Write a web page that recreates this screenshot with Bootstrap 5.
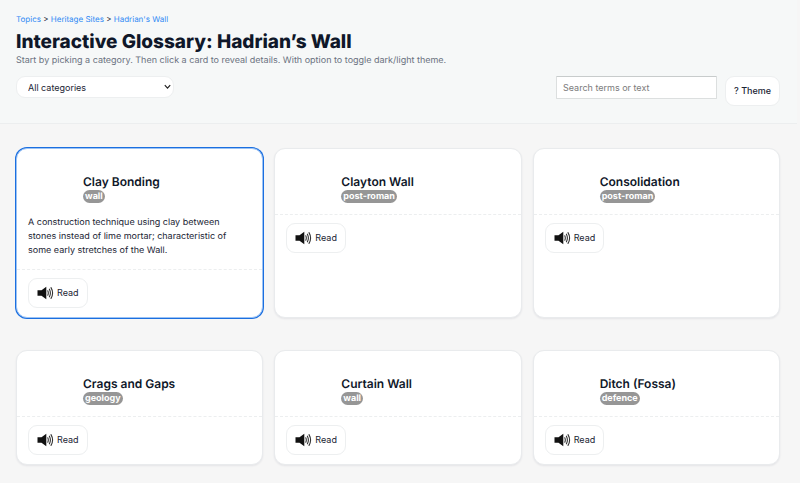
<!DOCTYPE html>
<html lang="en">
<head>
<meta charset="utf-8">
<meta name="viewport" content="width=device-width, initial-scale=1">
<title>Interactive Glossary: Hadrian’s Wall</title>
<link href="https://cdn.jsdelivr.net/npm/bootstrap@5.3.0/dist/css/bootstrap.min.css" rel="stylesheet">
<style>
body { font-family: Inter, "Liberation Sans", sans-serif; font-size: 9px; line-height: 14px; color: #1a2433; background: #f6f6f6; padding-right: 3px; text-rendering: geometricPrecision; }
.page-head { background: #f6f8f8; border-bottom: 1px solid #eceeef; padding: 12px 17px 17px 16px; }
.crumbs { font-size: 8px; color: #1a2433; }
.crumbs a { color: #2f8af5; text-decoration: none; }
.page-title { font-size: 19px; line-height: 25px; font-weight: 800; color: #0f1729; margin: 3px 0 0; }
.intro { color: #6b7280; margin: 0 0 8px; }
.pill { font-size: 9px; line-height: 14px; color: #1a2433; background: #fff; border: 1px solid #edeff0; border-radius: 9px; }
.pick { width: 158px; height: 22px; padding: 1px 24px 0 11px; appearance: none; }
.pick-wrap svg { right: 3px; top: 8px; pointer-events: none; }
.find { width: 161px; height: 23px; padding: 0 6px; font-size: 9px; line-height: 14px; color: #1a2433; border: 1px solid #dcdfdf; border-top-color: #c8cccc; border-radius: 1px; background: #fff; }
.find::placeholder { color: #7b7b7b; opacity: 1; }
.theme-btn { padding: 7px 8px; font-weight: 500; }
.terms { padding: 24px 17px 19px 16px; display: grid; grid-template-columns: repeat(3, minmax(0, 1fr)); gap: 32px 11px; }
.term { background: #fff; border: 1px solid #e9ebed; border-radius: 11px; box-shadow: 0 1px 2px rgba(20, 30, 60, .08); }
.term.active { border-color: #9cc3f4; box-shadow: 0 0 0 1px #1b6fe0; }
.term-head { padding: 25px 11px 11px 66px; }
.term-name { font-size: 12px; line-height: 16px; font-weight: 600; color: #0f1729; margin: 0; }
.tag { font-size: 9px; line-height: 13px; font-weight: 700; color: #fff; background: #969696; border-radius: 7px; padding: 0 2px; }
.term-text { padding: 2px 24px 11px 11px; margin: 0; }
.term-foot { border-top: 1px dashed #eceeef; padding: 8px 12px 9px 11px; }
.read { padding: 7px 8px; gap: 3px; }
</style>
<script src="https://cdn.jsdelivr.net/npm/bootstrap@5.3.0/dist/js/bootstrap.bundle.min.js" defer></script>
</head>
<body>
<svg class="d-none" aria-hidden="true">
  <symbol id="speaker" viewBox="0 0 17 14">
    <path d="M0.5 4.3h4L9.3.7v12.6L4.5 9.8h-4z" fill="#111"/>
    <path d="M10.8 4.8q1 2.2 0 4.4M12.4 3.2q2 3.8 0 7.6M14 1.6q3.2 5.4 0 10.8" fill="none" stroke="#333" stroke-width="1.1" stroke-linecap="round"/>
  </symbol>
</svg>
<header class="page-head">
  <nav class="crumbs" aria-label="Breadcrumb"><a href="#">Topics</a> &gt; <a href="#">Heritage Sites</a> &gt; <a href="#">Hadrian's Wall</a></nav>
  <h1 class="page-title">Interactive Glossary: Hadrian’s Wall</h1>
  <p class="intro">Start by picking a category. Then click a card to reveal details. With option to toggle dark/light theme.</p>
  <div class="d-flex align-items-start">
    <div class="pick-wrap position-relative me-auto">
      <select class="pill pick" aria-label="Category"><option>All categories</option></select>
      <svg class="position-absolute" width="7" height="6" viewBox="0 0 7 6" aria-hidden="true"><path d="M.8 1.2l2.7 2.9 2.7-2.9" fill="none" stroke="#222" stroke-width="1.2"/></svg>
    </div>
    <input class="find me-2" type="search" placeholder="Search terms or text" aria-label="Search terms or text">
    <button class="pill theme-btn" type="button">? Theme</button>
  </div>
</header>
<main class="terms">
  <article class="term active">
    <div class="term-head"><h2 class="term-name">Clay Bonding</h2><span class="tag d-table">wall</span></div>
    <p class="term-text">A construction technique using clay between stones instead of lime mortar; characteristic of some early stretches of the Wall.</p>
    <div class="term-foot"><button class="pill read d-flex align-items-center" type="button"><svg width="17" height="14" aria-hidden="true"><use href="#speaker"/></svg>Read</button></div>
  </article>
  <article class="term">
    <div class="term-head"><h2 class="term-name">Clayton Wall</h2><span class="tag d-table">post-roman</span></div>
    <div class="term-foot"><button class="pill read d-flex align-items-center" type="button"><svg width="17" height="14" aria-hidden="true"><use href="#speaker"/></svg>Read</button></div>
  </article>
  <article class="term">
    <div class="term-head"><h2 class="term-name">Consolidation</h2><span class="tag d-table">post-roman</span></div>
    <div class="term-foot"><button class="pill read d-flex align-items-center" type="button"><svg width="17" height="14" aria-hidden="true"><use href="#speaker"/></svg>Read</button></div>
  </article>
  <article class="term">
    <div class="term-head"><h2 class="term-name">Crags and Gaps</h2><span class="tag d-table">geology</span></div>
    <div class="term-foot"><button class="pill read d-flex align-items-center" type="button"><svg width="17" height="14" aria-hidden="true"><use href="#speaker"/></svg>Read</button></div>
  </article>
  <article class="term">
    <div class="term-head"><h2 class="term-name">Curtain Wall</h2><span class="tag d-table">wall</span></div>
    <div class="term-foot"><button class="pill read d-flex align-items-center" type="button"><svg width="17" height="14" aria-hidden="true"><use href="#speaker"/></svg>Read</button></div>
  </article>
  <article class="term">
    <div class="term-head"><h2 class="term-name">Ditch (Fossa)</h2><span class="tag d-table">defence</span></div>
    <div class="term-foot"><button class="pill read d-flex align-items-center" type="button"><svg width="17" height="14" aria-hidden="true"><use href="#speaker"/></svg>Read</button></div>
  </article>
</main>
</body>
</html>
